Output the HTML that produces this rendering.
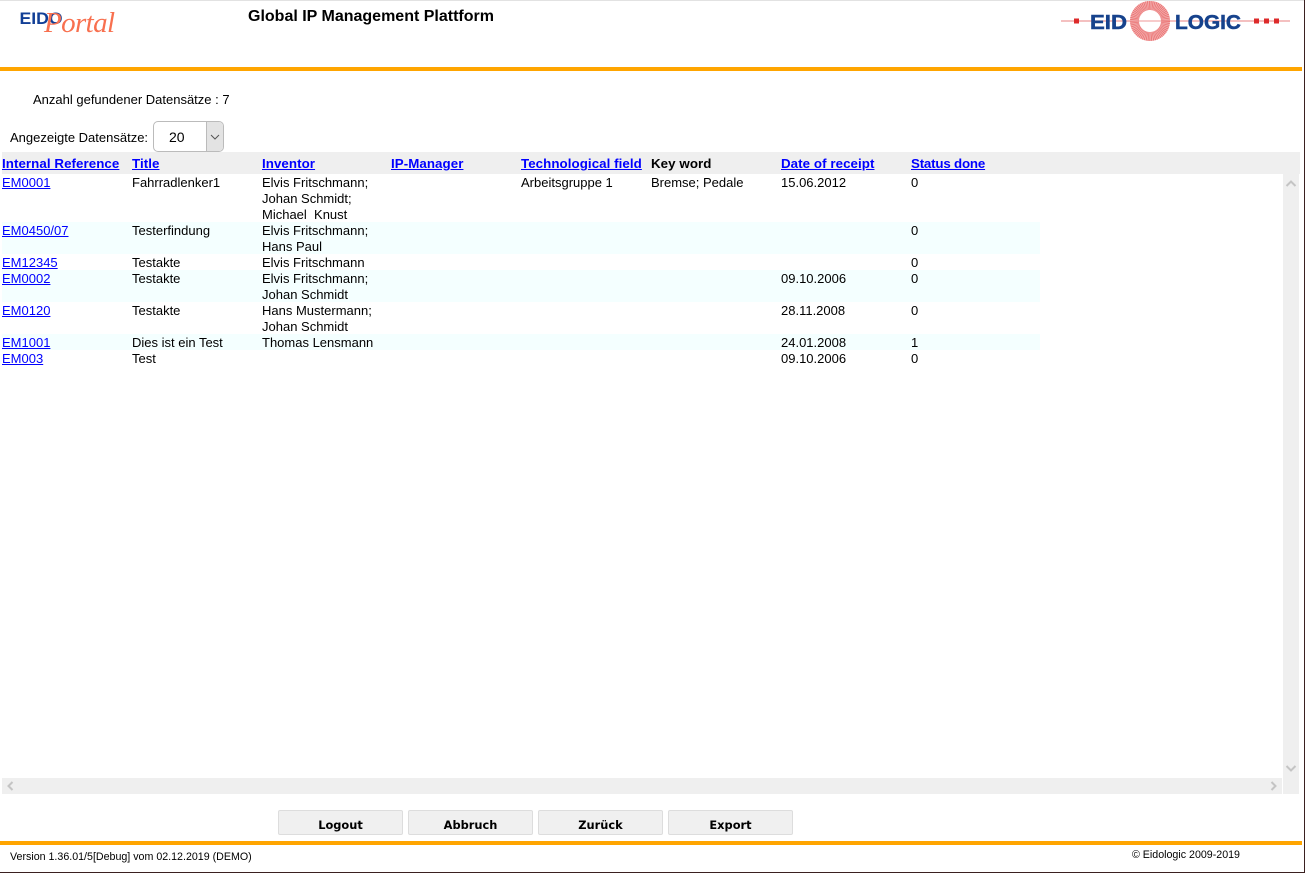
<!DOCTYPE html>
<html><head><meta charset="utf-8"><title>EIDOPortal</title>
<style>
html,body{margin:0;padding:0;background:#fff}
body{position:relative;width:1305px;height:873px;overflow:hidden;font-family:"Liberation Sans",Arial,sans-serif;font-size:13px;color:#000}
.a{position:absolute}
a{color:#00f;text-decoration:underline}
.t{white-space:nowrap;line-height:16px}
table{border-collapse:collapse;table-layout:fixed;width:1038px;position:absolute;left:2px;top:152px}
th,td{padding:0;text-align:left;vertical-align:top;white-space:pre}
th{height:21px;padding-top:1px;font-size:13.33px;line-height:21px;font-weight:bold;letter-spacing:.06px}
td{font-size:13px;line-height:16px;position:relative;top:1px}
.z{position:absolute;left:2px;width:1038px;background:#f4ffff}
.btn{position:absolute;top:810px;width:123px;height:23px;border:1px solid #ddd;border-radius:2px;background:#f0f0f0;text-align:center;font:bold 11.4px/29px "DejaVu Sans",sans-serif;color:#000}
</style></head>
<body>
<div class="a" style="left:0;top:0;width:1305px;height:1px;background:#e2e2e2"></div>
<div class="a" style="right:0;top:0;width:1px;height:873px;background:#3a2020"></div>
<div class="a" style="left:0;top:872px;width:1305px;height:1px;background:#3a2020"></div>

<svg class="a" style="left:0;top:0" width="130" height="50">
<text x="19.5" y="24" font-family="Liberation Sans" font-weight="bold" font-size="16.5" fill="#123f96" textLength="43" lengthAdjust="spacingAndGlyphs">EIDO</text>
<text x="44" y="32" font-family="Liberation Serif" font-style="italic" font-size="29" fill="#f8704f" textLength="71">Portal</text>
</svg>
<div class="a t" style="left:248px;top:9px;font-size:16px;font-weight:bold">Global IP Management Plattform</div>

<svg class="a" style="left:1055px;top:0" width="245" height="45">
<line x1="6" y1="21" x2="235" y2="21" stroke="#ee9a9a" stroke-width="1.2"/>
<rect x="19" y="18.5" width="5" height="5" fill="#dd2a2a"/>
<rect x="199" y="18.5" width="5" height="5" fill="#dd2a2a"/>
<rect x="209" y="18.5" width="5" height="5" fill="#dd2a2a"/>
<rect x="219" y="18.5" width="5" height="5" fill="#dd2a2a"/>
<circle cx="95" cy="21" r="15.5" fill="none" stroke="#f4b4b4" stroke-width="9"/>
<circle cx="95" cy="21" r="15.5" fill="none" stroke="#ea7474" stroke-width="9" stroke-dasharray=".8 .7"/>
<line x1="84" y1="21" x2="106" y2="21" stroke="#f3b0b0" stroke-width="1"/>
<text x="35" y="29" font-family="Liberation Sans" font-weight="bold" font-size="20" fill="#16428c" stroke="#16428c" stroke-width=".5" textLength="37" lengthAdjust="spacingAndGlyphs">EID</text>
<text x="120" y="29" font-family="Liberation Sans" font-weight="bold" font-size="20" fill="#16428c" stroke="#16428c" stroke-width=".5" textLength="66" lengthAdjust="spacingAndGlyphs">LOGIC</text>
</svg>

<div class="a" style="left:0;top:67px;width:1302px;height:4px;background:#ffa500"></div>

<div class="a t" style="left:33px;top:92px">Anzahl gefundener Datensätze : 7</div>
<div class="a t" style="left:10px;top:130px">Angezeigte Datensätze:</div>

<div class="a" style="left:153px;top:121px;width:69px;height:29px;border:1px solid #bbb;border-radius:5px;background:#fff;overflow:hidden">
  <div class="a t" style="left:15px;top:7px;font-size:14px">20</div>
  <div class="a" style="left:52px;top:0;width:17px;height:29px;background:#e3e3e3;border-left:1px solid #bbb"></div>
  <svg class="a" style="left:55px;top:11px" width="12" height="8"><path d="M2 2l4 4 4-4" fill="none" stroke="#555" stroke-width="1"/></svg>
</div>

<div class="a" style="left:2px;top:152px;width:1298px;height:22px;background:#efefef"></div>
<div class="a" style="left:1283px;top:174px;width:16px;height:620px;background:#efefef"></div>
<div class="a" style="left:2px;top:778px;width:1280px;height:16px;background:#efefef"></div>
<svg class="a" style="left:1283px;top:176px" width="16" height="14"><path d="M3.5 10l4.5-4.5 4.5 4.5" fill="none" stroke="#c4c4c4" stroke-width="2"/></svg>
<svg class="a" style="left:1283px;top:762px" width="16" height="14"><path d="M3.5 4l4.5 4.5 4.5-4.5" fill="none" stroke="#c4c4c4" stroke-width="2"/></svg>
<svg class="a" style="left:3px;top:779px" width="14" height="14"><path d="M9.5 3l-4 4 4 4" fill="none" stroke="#c4c4c4" stroke-width="2"/></svg>
<svg class="a" style="left:1267px;top:779px" width="14" height="14"><path d="M4.5 3l4 4-4 4" fill="none" stroke="#c4c4c4" stroke-width="2"/></svg>

<div class="z" style="top:222px;height:32px"></div>
<div class="z" style="top:270px;height:32px"></div>
<div class="z" style="top:334px;height:16px"></div>

<table>
<colgroup><col style="width:130px"><col style="width:130px"><col style="width:129px"><col style="width:130px"><col style="width:130px"><col style="width:130px"><col style="width:130px"><col style="width:129px"></colgroup>
<tr><th><a href="#">Internal Reference</a></th><th><a href="#">Title</a></th><th><a href="#">Inventor</a></th><th><a href="#">IP-Manager</a></th><th><a href="#">Technological field</a></th><th>Key word</th><th><a href="#">Date of receipt</a></th><th style="letter-spacing:-.2px"><a href="#">Status done</a></th></tr>
<tr><td><a href="#">EM0001</a></td><td>Fahrradlenker1</td><td>Elvis Fritschmann;
Johan Schmidt;
Michael  Knust</td><td></td><td>Arbeitsgruppe 1</td><td>Bremse; Pedale</td><td>15.06.2012</td><td>0</td></tr>
<tr><td><a href="#">EM0450/07</a></td><td>Testerfindung</td><td>Elvis Fritschmann;
Hans Paul</td><td></td><td></td><td></td><td></td><td>0</td></tr>
<tr><td><a href="#">EM12345</a></td><td>Testakte</td><td>Elvis Fritschmann</td><td></td><td></td><td></td><td></td><td>0</td></tr>
<tr><td><a href="#">EM0002</a></td><td>Testakte</td><td>Elvis Fritschmann;
Johan Schmidt</td><td></td><td></td><td></td><td>09.10.2006</td><td>0</td></tr>
<tr><td><a href="#">EM0120</a></td><td>Testakte</td><td>Hans Mustermann;
Johan Schmidt</td><td></td><td></td><td></td><td>28.11.2008</td><td>0</td></tr>
<tr><td><a href="#">EM1001</a></td><td>Dies ist ein Test</td><td>Thomas Lensmann</td><td></td><td></td><td></td><td>24.01.2008</td><td>1</td></tr>
<tr><td><a href="#">EM003</a></td><td>Test</td><td></td><td></td><td></td><td></td><td>09.10.2006</td><td>0</td></tr>
</table>

<div class="btn" style="left:278px">Logout</div>
<div class="btn" style="left:408px">Abbruch</div>
<div class="btn" style="left:538px">Zurück</div>
<div class="btn" style="left:668px">Export</div>

<div class="a" style="left:0;top:841px;width:1302px;height:4px;background:#ffa500"></div>
<div class="a t" style="left:10px;top:849px;font-size:10.67px">Version 1.36.01/5[Debug] vom 02.12.2019 (DEMO)</div>
<div class="a t" style="left:1132px;top:847px;font-size:10.67px">© Eidologic 2009-2019</div>
</body></html>
